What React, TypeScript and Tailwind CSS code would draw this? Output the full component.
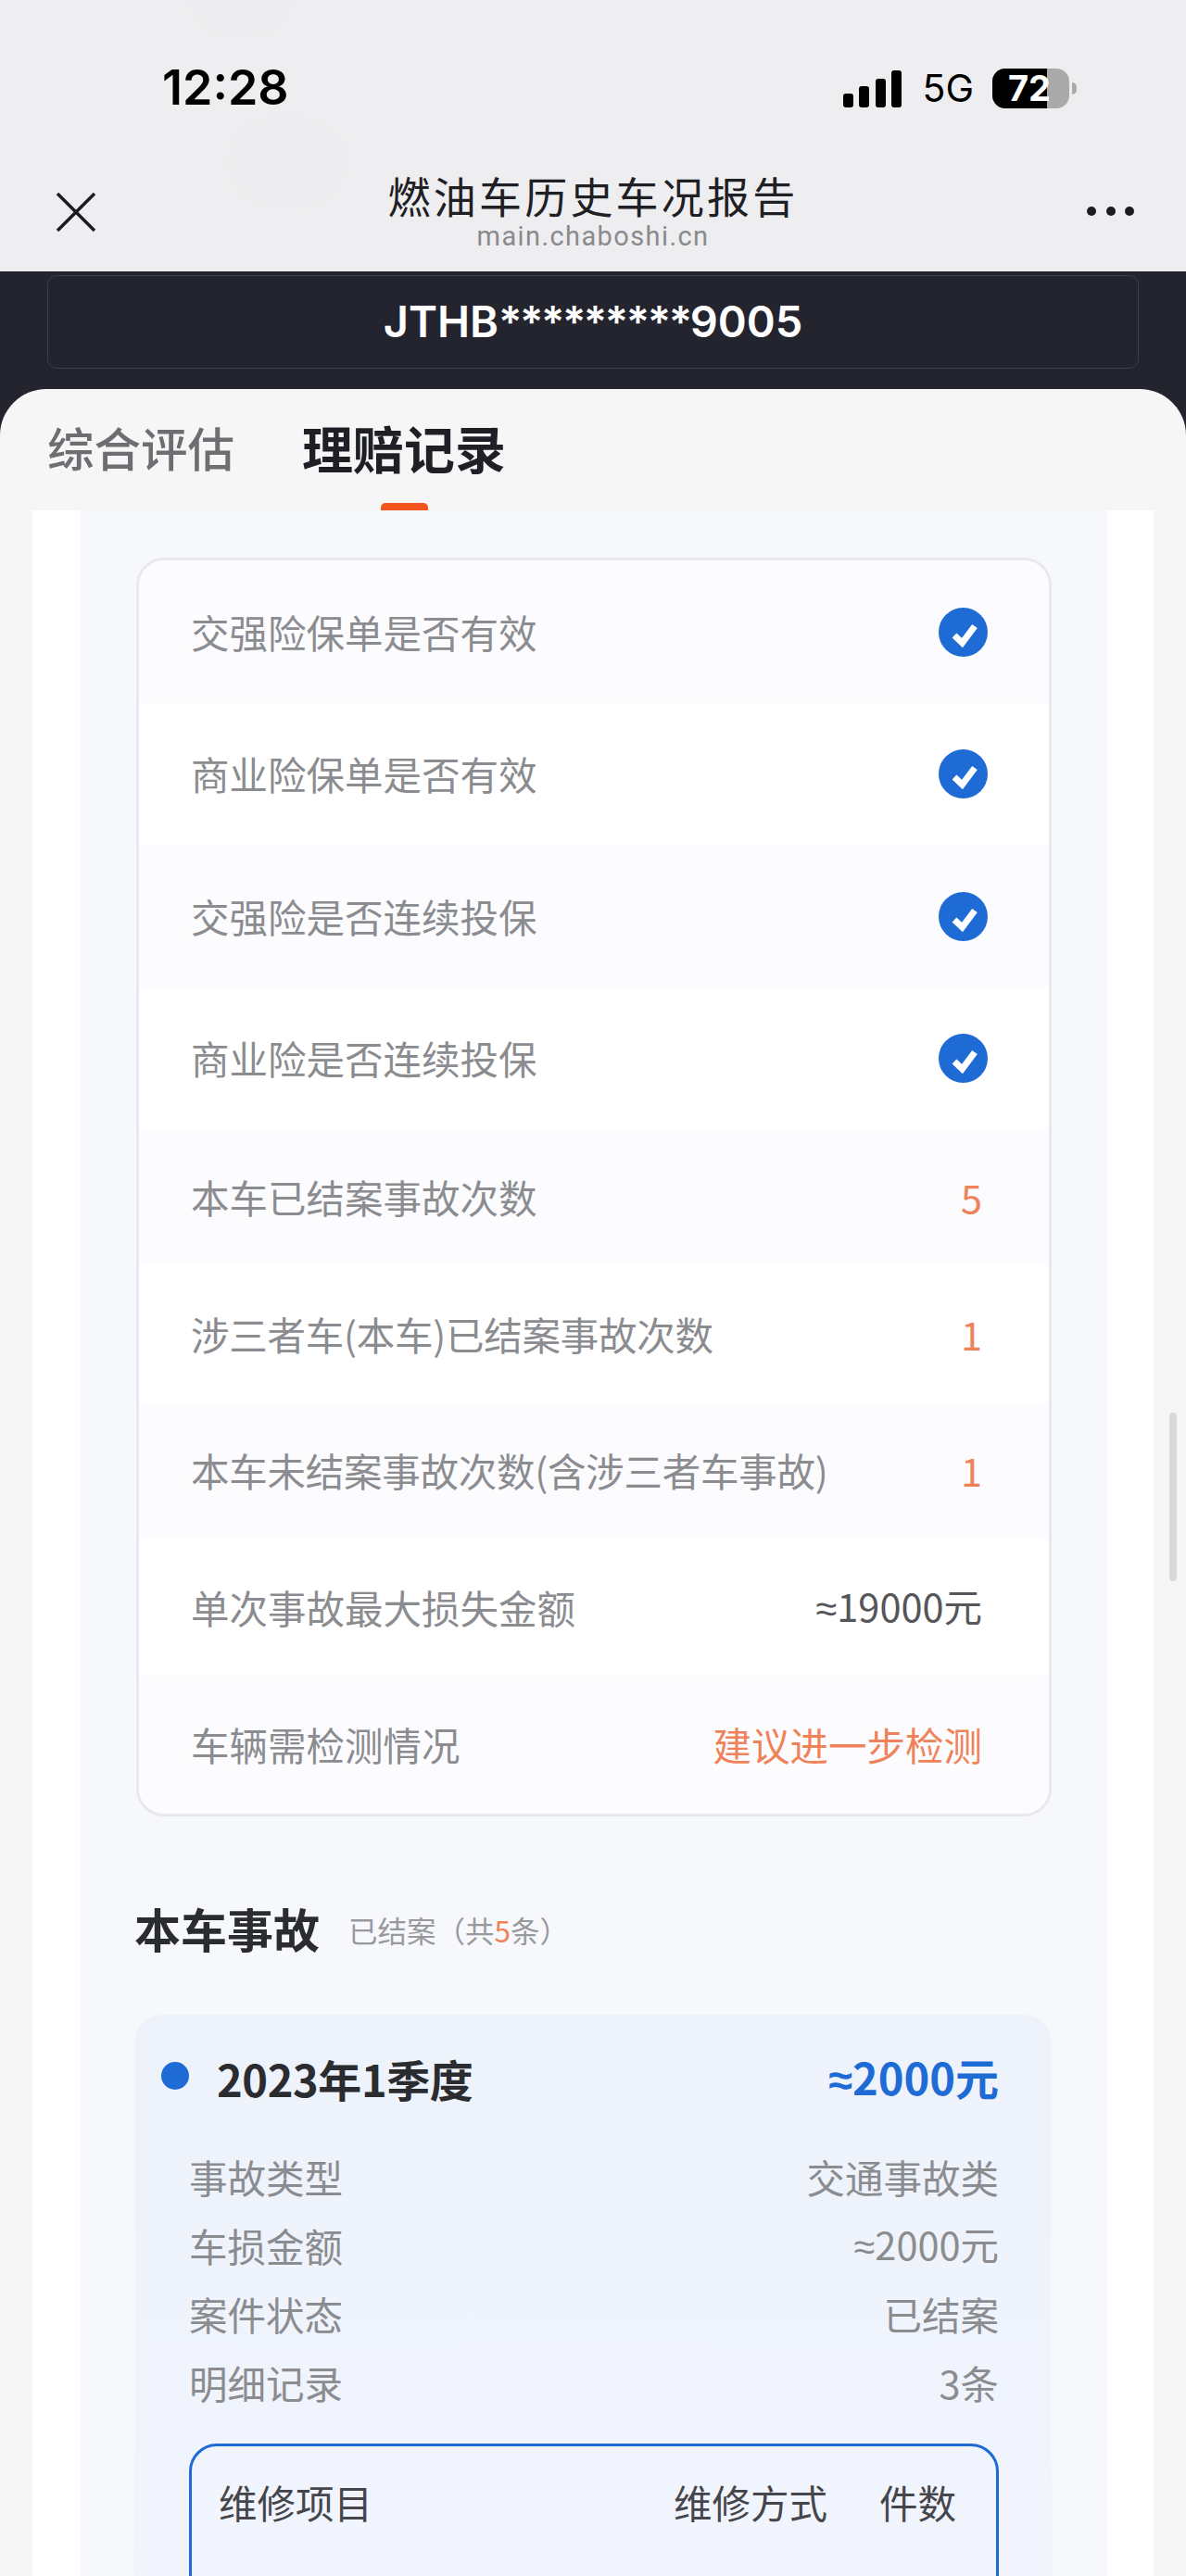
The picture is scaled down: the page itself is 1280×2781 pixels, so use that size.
import React from "react";

const cjk = "font-['Noto_Sans_CJK_SC','Noto_Sans',sans-serif]";

function Check() {
  return (
    <svg width="53" height="53" viewBox="0 0 53 53">
      <circle cx="26.5" cy="26.5" r="26.5" fill="#1f6bd6" />
      <path d="M17 30 L25.5 38 L39 20" fill="none" stroke="#ffffff" strokeWidth="7" strokeLinejoin="miter" />
    </svg>
  );
}

function Money({ text }: { text: string }) {
  return (
    <span>
      <span className="font-['Liberation_Sans',sans-serif]">≈</span>
      {text}
    </span>
  );
}

type Row = { label: string; h: string; alt: boolean; value?: React.ReactNode; tone?: "orange" | "dark"; tight?: boolean };

const rows: Row[] = [
  { label: "交强险保单是否有效", h: "h-[154px]", alt: true },
  { label: "商业险保单是否有效", h: "h-[153px]", alt: false },
  { label: "交强险是否连续投保", h: "h-[154px]", alt: true },
  { label: "商业险是否连续投保", h: "h-[153px]", alt: false },
  { label: "本车已结案事故次数", h: "h-[147px]", alt: true, value: "5", tone: "orange" },
  { label: "涉三者车(本车)已结案事故次数", h: "h-[148px]", alt: false, value: "1", tone: "orange", tight: true },
  { label: "本车未结案事故次数(含涉三者车事故)", h: "h-[147px]", alt: true, value: "1", tone: "orange", tight: true },
  { label: "单次事故最大损失金额", h: "h-[148px]", alt: false, value: <Money text="19000元" />, tone: "dark" },
  { label: "车辆需检测情况", h: "h-[149px]", alt: true, value: "建议进一步检测", tone: "orange" },
];

const details: [string, React.ReactNode][] = [
  ["事故类型", "交通事故类"],
  ["车损金额", <Money text="2000元" />],
  ["案件状态", "已结案"],
  ["明细记录", "3条"],
];

export default function App() {
  return (
    <div className={`relative flex h-[2781px] w-[1280px] flex-col overflow-hidden bg-[#23242e] ${cjk}`}>
      {/* top chrome */}
      <header className="relative h-[293px] shrink-0 overflow-hidden bg-[#eeeef0]">
        <div className="absolute left-[245px] top-[125px] h-[100px] w-[130px] rounded-full bg-[#ededef]" />
        <div className="absolute left-[205px] top-[-30px] h-[70px] w-[110px] rounded-full bg-[#ededef]" />
        <div className="relative flex h-[190px] items-center justify-between pl-[175px] pr-[118px]">
          <span className="font-['Inter',sans-serif] text-[52px] font-semibold leading-none text-black">12:28</span>
          <div className="flex items-center">
            <div className="flex h-[41px] items-end gap-[6.5px]">
              <span className="h-[15px] w-[11px] rounded-[3px] bg-black" />
              <span className="h-[23px] w-[11px] rounded-[3px] bg-black" />
              <span className="h-[31px] w-[11px] rounded-[3px] bg-black" />
              <span className="h-[40px] w-[11px] rounded-[3px] bg-black" />
            </div>
            <span className="ml-[22px] font-['Inter',sans-serif] text-[41px] font-normal leading-none text-black">5G</span>
            <div className="relative ml-[20px] h-[43px] w-[83px] overflow-hidden rounded-[14px] bg-[#aaaaaa]">
              <div className="h-full w-[59px] bg-black" />
              <span className="absolute left-[17px] top-0 font-['Inter',sans-serif] text-[38px] font-bold leading-[43px] text-white">72</span>
            </div>
            <span className="ml-[3px] h-[13px] w-[5px] rounded-r-full bg-[#aaaaaa]" />
          </div>
        </div>
        <div className="relative flex h-[103px] items-start justify-between pl-[60px] pr-[56px]">
          <svg width="44" height="44" viewBox="0 0 44 44" className="mt-[17px]">
            <path d="M2 2 L42 42 M42 2 L2 42" stroke="#1c1c20" strokeWidth="3.5" />
          </svg>
          <div className="absolute left-0 right-0 top-[-5px] flex flex-col items-center">
            <span className="text-[46px] font-normal leading-[50px] tracking-[3.2px] text-[#1f2024]">燃油车历史车况报告</span>
            <span className="mt-[4px] font-['Roboto',sans-serif] text-[29px] leading-[32px] tracking-[1.4px] text-[#8a8a8d]">main.chaboshi.cn</span>
          </div>
          <div className="mt-[33px] flex gap-[10.5px]">
            <span className="h-[10px] w-[10px] rounded-full bg-[#1c1c20]" />
            <span className="h-[10px] w-[10px] rounded-full bg-[#1c1c20]" />
            <span className="h-[10px] w-[10px] rounded-full bg-[#1c1c20]" />
          </div>
        </div>
      </header>

      {/* VIN */}
      <div className="shrink-0 px-[51px] pb-[22px] pt-[4px]">
        <div className="flex h-[101px] items-center justify-center rounded-[10px] border border-[#3e3f4a] font-['Inter',sans-serif] text-[47px] font-semibold text-white">
          <span>
            JTHB<span className="tracking-[-2.4px]">*********</span>9005
          </span>
        </div>
      </div>

      {/* sheet */}
      <main className="flex min-h-0 flex-1 flex-col rounded-t-[50px] bg-[#f6f6f7]">
        <nav className="flex h-[131px] shrink-0 items-start gap-[73px] px-[51px] pt-[31px]">
          <span className="text-[50.5px] font-medium leading-[62px] text-[#6d6d72]">综合评估</span>
          <div className="relative flex h-[100px] flex-col items-center">
            <span className="text-[55px] font-bold leading-[62px] text-[#1f2026]">理赔记录</span>
            <span className="absolute bottom-0 h-[8px] w-[51px] rounded-t-[5px] bg-[#f2561e]" />
          </div>
        </nav>

        <div className="relative ml-[35px] w-[1210px] flex-1 bg-white pl-[52px] pr-[50px]">
          <div className="h-full bg-[#f7f8fb] pl-[60px] pr-[60px] pt-[51px]">
            {/* summary */}
            <section className="overflow-hidden rounded-[30px] border-[3px] border-[#e8e9ee] bg-white">
              {rows.map((r) => (
                <div
                  key={r.label}
                  className={`flex items-center justify-between pl-[56px] text-[41.5px] ${r.value ? "pr-[72px]" : "pr-[66px]"} ${r.h} ${r.alt ? "bg-[#fcfcfe]" : "bg-white"}`}
                >
                  <span className={`text-[#8b8c90] ${r.tight ? "tracking-[-0.25px]" : ""}`}>{r.label}</span>
                  {r.value ? (
                    <span className={r.tone === "orange" ? "text-[#f0825a]" : "text-[#55565a]"}>{r.value}</span>
                  ) : (
                    <Check />
                  )}
                </div>
              ))}
            </section>

            {/* heading */}
            <div className="ml-[-2px] mt-[83px] flex items-center">
              <h2 className="text-[50px] font-bold leading-[70px] text-[#2b2c30]">本车事故</h2>
              <span className="ml-[31px] mt-[4px] text-[31.5px] leading-[70px] text-[#98999d]">
                已结案（共<span className="text-[#f0825a]">5</span>条）
              </span>
            </div>

            {/* accident card */}
            <section className="ml-[-2px] mt-[57px] h-[700px] rounded-[30px] bg-gradient-to-b from-[#edf2fb] to-[#f2f5fd] pl-[59px] pr-[57px] pt-[31px]">
              <div className="relative flex h-[76px] items-center justify-between">
                <span className="absolute left-[-30px] top-[20px] h-[30px] w-[30px] rounded-full bg-[#1f6bd6]" />
                <span className="ml-[30px] text-[47px] font-bold tracking-[-0.4px] text-[#2b2c30]">2023年1季度</span>
                <span className="text-[47px] font-bold text-[#1f6bd6]">
                  <Money text="2000元" />
                </span>
              </div>
              <dl className="mt-[31px]">
                {details.map(([k, v]) => (
                  <div key={k} className="flex h-[74px] items-center justify-between text-[41.5px]">
                    <dt className="text-[#8b8c90]">{k}</dt>
                    <dd className="text-[#8b8c90]">{v}</dd>
                  </div>
                ))}
              </dl>
              <div className="mt-[29px] h-[400px] rounded-[30px] border-[3px] border-[#1f6bd6] pl-[29px] pr-[43px] pt-[28px]">
                <div className="flex h-[64px] items-center text-[41.5px] text-[#45464b]">
                  <span className="flex-1">维修项目</span>
                  <span>维修方式</span>
                  <span className="ml-[56px]">件数</span>
                </div>
                <div className="mt-[35px] flex h-[64px] items-center text-[41.5px] text-[#8b8c90]">
                  <span className="flex-1">前保险杠</span>
                  <span className="mr-[130px]">修复</span>
                </div>
              </div>
            </section>
          </div>
        </div>
      </main>

      {/* scrollbar */}
      <div className="absolute left-[1262px] top-[1525px] h-[182px] w-[8px] rounded-full bg-[#d9d9db]" />
    </div>
  );
}
